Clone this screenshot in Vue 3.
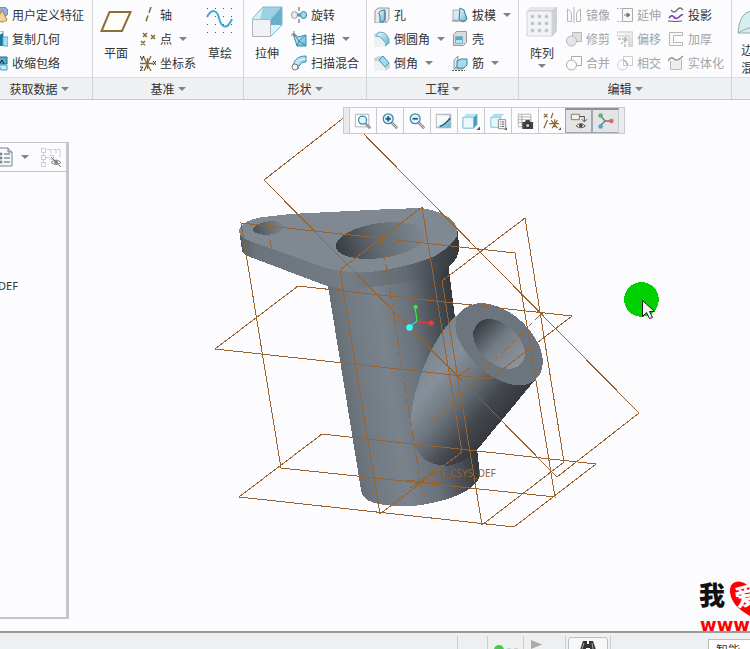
<template>
  <div class="app">
    <svg class="defs" width="0" height="0" aria-hidden="true">
      <defs>
        <linearGradient id="blue" x1="0" y1="0" x2="1" y2="1">
          <stop offset="0" stop-color="#f2fbff" />
          <stop offset="1" stop-color="#5db3d3" />
        </linearGradient>
        <linearGradient id="grey" x1="0" y1="0" x2="1" y2="1">
          <stop offset="0" stop-color="#fff" />
          <stop offset="1" stop-color="#d5d8da" />
        </linearGradient>
      </defs>
    </svg>

    <header class="ribbon">
      <section v-for="group in groups" :key="group.title" class="group" :class="group.cls">
        <div class="group-body">
          <template v-for="(block, i) in group.blocks" :key="i">
            <button v-if="block.big" type="button" class="big">
              <svg width="32" height="32" viewBox="0 0 32 32" v-html="icons[block.icon]"></svg>
              <span>{{ block.big }}</span>
              <i v-if="block.arrow" class="arrow"></i>
            </button>
            <div v-else class="col">
              <button
                v-for="item in block.items"
                :key="item.text"
                type="button"
                class="tool"
                :disabled="item.off"
              >
                <svg width="16" height="16" viewBox="0 0 16 16" v-html="icons[item.icon]"></svg>
                <span>{{ item.text }}</span>
                <i v-if="item.arrow" class="arrow"></i>
              </button>
            </div>
          </template>
        </div>
        <button type="button" class="group-title">
          {{ group.title }}<i v-if="group.title" class="arrow"></i>
        </button>
      </section>
    </header>

    <main class="work">
      <aside class="tree">
        <div class="tree-head">
          <button type="button" class="tree-btn cut" aria-label="设置">
            <svg width="18" height="20" viewBox="0 0 18 20">
              <path d="M1 1h12l4 4v14H1z" fill="#f4f8fa" stroke="#77838c" />
              <path d="M13 1v4h4" fill="#b9d8e5" stroke="#77838c" />
              <path d="M9 7h6M9 11h6M9 15h6" stroke="#52616c" />
              <g fill="none" stroke="#52616c"><circle cx="6" cy="7" r="1" /><circle cx="6" cy="11" r="1" /><circle cx="6" cy="15" r="1" /></g>
            </svg>
          </button>
          <i class="arrow"></i>
          <button type="button" class="tree-btn" aria-label="显示">
            <svg width="20" height="20" viewBox="0 0 20 20">
              <g fill="none" stroke="#c9cccf">
                <path d="M.5 1.500h4v4h-4zM.5 8.500h4v4h-4zM.5 15.500h4v4h-4zM2.500 5.500v3M2.500 12.500v3M4.500 10.500h4M8.500 8.500h4v4h-4M6 2.500h4v4M12 2.500h3v4M16 2.500h3v8" />
              </g>
              <path d="M10 15.500q5-5 10 0q-5 4-10 0z" fill="#eee" stroke="#888" />
              <circle cx="15" cy="15" r="2" fill="#888" />
              <path d="M10 10l10 10" stroke="#777" />
            </svg>
          </button>
        </div>
        <p class="tree-item">DEF</p>
      </aside>

      <div class="canvas">
        <svg class="scene" viewBox="68 100 682 531">
          <defs>
            <linearGradient id="tube" gradientUnits="userSpaceOnUse" x1="344" y1="390" x2="462" y2="371">
              <stop offset="0" stop-color="#666e76" />
              <stop offset=".15" stop-color="#727b83" />
              <stop offset=".4" stop-color="#7a838c" />
              <stop offset=".65" stop-color="#69717a" />
              <stop offset=".85" stop-color="#4a5056" />
              <stop offset="1" stop-color="#373b40" />
            </linearGradient>
            <linearGradient id="rim" gradientUnits="userSpaceOnUse" x1="240" y1="0" x2="459" y2="0">
              <stop offset="0" stop-color="#555d65" />
              <stop offset=".07" stop-color="#6b747c" />
              <stop offset=".5" stop-color="#747d86" />
              <stop offset=".75" stop-color="#636b73" />
              <stop offset=".92" stop-color="#3f444a" />
              <stop offset="1" stop-color="#34383d" />
            </linearGradient>
            <linearGradient id="branch" gradientUnits="userSpaceOnUse" x1="440" y1="335" x2="518" y2="399">
              <stop offset="0" stop-color="#7c868f" />
              <stop offset=".25" stop-color="#87909a" />
              <stop offset=".5" stop-color="#6f7880" />
              <stop offset=".8" stop-color="#44484e" />
              <stop offset="1" stop-color="#36393e" />
            </linearGradient>
            <linearGradient id="bore" gradientUnits="userSpaceOnUse" x1="336" y1="245" x2="426" y2="233">
              <stop offset="0" stop-color="#393d42" />
              <stop offset=".45" stop-color="#626a71" />
              <stop offset="1" stop-color="#7f8891" />
            </linearGradient>
            <linearGradient id="bore2" gradientUnits="userSpaceOnUse" x1="478" y1="326" x2="516" y2="362">
              <stop offset="0" stop-color="#3c4045" />
              <stop offset=".5" stop-color="#737c85" />
              <stop offset="1" stop-color="#89929b" />
            </linearGradient>
            <linearGradient id="bore3" gradientUnits="userSpaceOnUse" x1="253" y1="230" x2="285" y2="226">
              <stop offset="0" stop-color="#4c5359" />
              <stop offset="1" stop-color="#7f8891" />
            </linearGradient>
          </defs>

          <g shape-rendering="crispEdges">
            <path fill="url(#tube)" d="M327 280L361 490Q362 499 374 503Q391 507 413 506Q447 502 466 491Q479 483 480 475L477 448L455 318L448 262z" />
            <path fill="url(#rim)" d="M239 230L242 250Q243 255 250 257L327 286Q345 290 370 287Q405 284 427 276Q441 272 448 267Q459 259 459 248L458 231z" />
            <path fill="#808991" d="M239 231Q240 221 263 217L290 214L390 209L422 208Q444 212 453 221Q459 228 457 236Q452 246 435 256Q410 267 370 272Q341 273 323 267L250 241Q240 238 239 231z" />
            <ellipse cx="381" cy="240.500" rx="45.500" ry="17.500" transform="rotate(-8 381 240.500)" fill="url(#bore)" />
            <ellipse cx="269" cy="228" rx="16" ry="6.500" transform="rotate(-6 269 228)" fill="url(#bore3)" />
            <path fill="url(#branch)" d="M467 307Q450 319 440 335Q426 357 419 381Q411 404 411 423Q411 444 423 458Q431 465 447 466Q465 463 477 450L535 380z" />
            <path fill="#6c757d" d="M483 303Q500 305 515 316Q530 327 539 345Q547 365 538 377Q530 387 514 385Q494 381 479 367Q464 353 457 336Q453 322 459 313Q468 303 483 303z" />
            <path fill="url(#bore2)" d="M488 319Q501 319 514 331Q525 343 525 355Q523 368 508 369Q495 367 485 358Q473 346 473 333Q476 320 488 319z" />

            <g class="wire">
              <path v-for="plane in planes" :key="plane" :d="plane" />
              <path d="M268 221l4 33" stroke-dasharray="8 4 3 4" />
              <path d="M382 240l41 260" stroke-dasharray="12 4 4 4" />
              <path d="M543 312L434 421" stroke-dasharray="12 4 4 4" />
              <path d="M537 311l6 3M456 377l14-9" />
              <path d="M406 480l34 4M410 488l22-14M421 483l18-1M412 490l14-14" />
            </g>
          </g>
          <text class="csys" x="428" y="477">PRT_CSYS_DEF</text>

          <g fill="none">
            <path d="M417 321l-2-14" stroke="#3f3" />
            <path d="M418 322l13 1" stroke="#f33" />
            <path d="M417 321l-8 6" stroke="#3ff" />
          </g>
          <circle cx="415.500" cy="307" r="2.200" fill="#3e3" />
          <circle cx="431" cy="323" r="2.600" fill="#f33" />
          <circle cx="409.500" cy="327.500" r="3.200" fill="#3ff" />

          <circle cx="641.500" cy="299.500" r="17.300" fill="#00cf00" shape-rendering="crispEdges" />
          <path d="M642.500 300.500v16l4-4l3 6l3-1l-3-6h5z" fill="#f2f2f2" stroke="#222" />

          <text class="mark-dark" x="699" y="605">我</text>
          <path d="M750 588C742 578 729 580 730 592C731 604 741 611 750 616z" fill="#f00" />
          <text class="mark-light" x="737" y="607" transform="rotate(-12 737 607)">爱</text>
          <text class="mark-url" x="700" y="631">www.</text>
        </svg>

        <div class="view-bar">
          <button
            v-for="view in views"
            :key="view.icon"
            type="button"
            :class="{ pressed: view.pressed }"
            :aria-label="view.label"
          >
            <svg width="18" height="18" viewBox="0 0 20 20" v-html="icons[view.icon]"></svg>
          </button>
        </div>
      </div>
    </main>

    <footer class="status">
      <div class="cell narrow"></div>
      <div class="cell lights">
        <svg width="28" height="12" viewBox="0 0 28 12">
          <circle cx="5" cy="6" r="5" fill="#4c4" />
          <circle cx="15" cy="7" r="3" fill="#ccc" />
          <circle cx="22" cy="7" r="3" fill="#ccc" />
        </svg>
      </div>
      <div class="cell flag">
        <svg width="14" height="14" viewBox="0 0 14 14"><path d="M1 0l11 4.500L1 9z" fill="#aaa" /></svg>
      </div>
      <div class="cell find">
        <button type="button" aria-label="查找">
          <svg width="18" height="16" viewBox="0 0 18 16">
            <path d="M4 1h4v3h2V1h4l3 9v5h-6V8H7v7H1v-5z" fill="#333" />
            <path d="M5 3l-2 6M13 3l1 6" stroke="#aaa" />
          </svg>
        </button>
      </div>
      <select class="filter" aria-label="过滤器">
        <option>智能</option>
      </select>
    </footer>
  </div>
</template>

<script setup>
const groups = [
  {
    title: '获取数据',
    cls: 'first',
    blocks: [
      {
        items: [
          { text: '用户定义特征', icon: 'udf' },
          { text: '复制几何', icon: 'copyGeom' },
          { text: '收缩包络', icon: 'shrink' },
        ],
      },
    ],
  },
  {
    title: '基准',
    blocks: [
      { big: '平面', icon: 'plane' },
      {
        items: [
          { text: '轴', icon: 'axis' },
          { text: '点', icon: 'point', arrow: true },
          { text: '坐标系', icon: 'csys' },
        ],
      },
      { big: '草绘', icon: 'sketch' },
    ],
  },
  {
    title: '形状',
    cls: 'tail',
    blocks: [
      { big: '拉伸', icon: 'extrude' },
      {
        items: [
          { text: '旋转', icon: 'revolve' },
          { text: '扫描', icon: 'sweep', arrow: true },
          { text: '扫描混合', icon: 'blend' },
        ],
      },
    ],
  },
  {
    title: '工程',
    cls: 'lead tail',
    blocks: [
      {
        items: [
          { text: '孔', icon: 'hole' },
          { text: '倒圆角', icon: 'round', arrow: true },
          { text: '倒角', icon: 'chamfer', arrow: true },
        ],
      },
      {
        items: [
          { text: '拔模', icon: 'draft', arrow: true },
          { text: '壳', icon: 'shell' },
          { text: '筋', icon: 'rib', arrow: true },
        ],
      },
    ],
  },
  {
    title: '编辑',
    cls: 'tail',
    blocks: [
      { big: '阵列', icon: 'pattern', arrow: true },
      {
        items: [
          { text: '镜像', icon: 'mirror', off: true },
          { text: '修剪', icon: 'trim', off: true },
          { text: '合并', icon: 'merge', off: true },
        ],
      },
      {
        items: [
          { text: '延伸', icon: 'extend', off: true },
          { text: '偏移', icon: 'offset', off: true },
          { text: '相交', icon: 'intersect', off: true },
        ],
      },
      {
        items: [
          { text: '投影', icon: 'project' },
          { text: '加厚', icon: 'thicken', off: true },
          { text: '实体化', icon: 'solidify', off: true },
        ],
      },
    ],
  },
  {
    title: '',
    cls: 'last',
    blocks: [{ big: '边界混合', icon: 'boundary' }],
  },
]

const views = [
  { icon: 'zoomFit', label: '重新调整' },
  { icon: 'zoomIn', label: '放大' },
  { icon: 'zoomOut', label: '缩小' },
  { icon: 'repaint', label: '重画' },
  { icon: 'shade', label: '显示样式' },
  { icon: 'saved', label: '已保存方向' },
  { icon: 'camera', label: '视图管理器' },
  { icon: 'datums', label: '基准显示过滤器' },
  { icon: 'notes', label: '注释显示', pressed: true },
  { icon: 'spin', label: '旋转中心', pressed: true },
]

// datum plane outlines
const planes = [
  'M241 223L515 253L555 497L281 468z',
  'M422 207L340 270L380 514L462 452z',
  'M525 218L442 281L482 525L564 462z',
  'M215 349L298 286L572 316L490 379z',
  'M322 434L596 464L514 527L239 497z',
  'M264 180L346 116L639 413L557 477z',
]

const lens = `<path d="M12 12l6 6" stroke="#8d8d8d" stroke-width="3"/><path d="M12 12l6 6" stroke="#ddd" stroke-width="1"/>
  <circle cx="8" cy="7.500" r="5.500" fill="#e4f5fb" stroke="#3a87a8" stroke-width="1.400"/>`

let dots = ''
for (let y = 0; y < 4; y++) {
  for (let x = 0; x < 4; x++) dots += `<path d="M${3 + x * 8} ${3 + y * 8}h1v1h-1z" fill="#555"/>`
}

let cells = ''
for (let y = 0; y < 3; y++) {
  for (let x = 0; x < 3; x++) cells += `<path d="M${5 + x * 7} ${10 + y * 7}h3v3h-3z" fill="#a9adb1" stroke="#d4e2ea"/>`
}

const icons = {
  udf: `<circle cx="11" cy="5" r="5" fill="#8db1e3" stroke="#557bb5"/><path d="M10 3l5 10q-5 4-10 0z" fill="#f2d39a" stroke="#a7823f"/>`,
  copyGeom: `<path d="M5 0h6v12H5z" fill="#fff" stroke="#888"/><path d="M7 4l4-2v13H7z" fill="#1b789e"/><path d="M11 6h5v9h-5z" fill="#a5dff5" stroke="#58a8c5"/>`,
  shrink: `<path d="M6 2h9v7H6z" fill="#5cabc9" stroke="#246c8a"/><path d="M6 5l2 3l2-3l2 4" fill="none" stroke="#123"/><path d="M7 10h8v5H9z" fill="#bdefff" stroke="#4b9db9"/>`,
  plane: `<path d="M9.500 7h21L22 26H1.500z" fill="#fffdf8" stroke="#8c6f38" stroke-width="2"/>`,
  axis: `<path d="M11 0L5 17" stroke="#86682e" stroke-width="1.500" stroke-dasharray="6 3"/>`,
  point: `<path d="M3 2l4 4m0-4l-4 4M11 4l4 4m0-4l-4 4M1 10l4 4m0-4l-4 4" stroke="#86682e" stroke-width="1.500"/>`,
  csys: `<path d="M0 8.500h13M3 1l8 15M11 1L4 16M7.500 3v11" stroke="#86682e" stroke-width="1.300"/><path d="M0 1l2 3 2-3M2 4v2M0 12h3l-3 4h3M13 6l3 4m0-4l-3 4" fill="none" stroke="#333"/>`,
  sketch: `${dots}<path d="M3 12c5-9 10-7 12 1s7 14 13 1" fill="none" stroke="#3aaedb" stroke-width="2"/>`,
  extrude: `<path d="M1 14L12 2h19L20 14z" fill="#9bd3e6"/><path d="M12 2h-1L1 14h8z" fill="#d7f0f8"/><path d="M31 2v18H20v-6z" fill="#69aec8"/><path d="M20 20h11L20 32z" fill="#d9f3fc"/><path d="M1.500 14.500h18v17h-18z" fill="#f1f2f3" stroke="#b1b5b8"/><path d="M1 14L12 2h19v18L20 31M20 14L31 2" fill="none" stroke="#7fb9cd"/>`,
  revolve: `<path d="M8 0v16" stroke="#555" stroke-dasharray="4 2"/><ellipse cx="3.500" cy="8" rx="3" ry="3.500" fill="#e8eaec" stroke="#999"/><ellipse cx="12.500" cy="8" rx="3" ry="3.500" fill="#a5d8ea" stroke="#277ca1"/><path d="M6 8h4" stroke="#4e9dbb" stroke-width="2"/>`,
  sweep: `<path d="M2 2l5 4 8-2v11H6z" fill="url(#blue)" stroke="#368aad"/><path d="M2 2l6 8 7-6M8 10l-2 5M8 10l7 5" fill="none" stroke="#368aad"/><path d="M0 4h5M3 0v6" stroke="#888"/>`,
  blend: `<path d="M2 11C3 4 8 1 15 1v6c-5 0-7 3-8 7z" fill="url(#blue)" stroke="#398bad"/><path d="M6 9c2-4 5-5 9-5" fill="none" stroke="#fff"/><circle cx="4" cy="12" r="3" fill="#f5f5f5" stroke="#777"/>`,
  hole: `<path d="M1 4l3-3h11v11l-3 4H1z" fill="#e8eaeb" stroke="#999"/><path d="M5 7q0-4 6-4v9l-2 3H6V9z" fill="url(#blue)" stroke="#187aa3"/><path d="M11 5v10" stroke="#777"/>`,
  round: `<path d="M0 3l4-2h6l6 7v4l-5 4H0z" fill="#d2d5d7"/><path d="M5 1q10 0 10 11l-4 3q0-9-9-10z" fill="url(#blue)" stroke="#69acc6"/><path d="M0 6h5l6 6v4H0z" fill="#eff0f1"/>`,
  chamfer: `<path d="M0 3l5-2h4l7 8v4l-5 3H0z" fill="#cfd2d4"/><path d="M0 6h5l6 6v4H0z" fill="#eff0f1"/><path d="M9 1l6 7-4 4-6-7z" fill="#9bdff1" stroke="#3d98b7"/>`,
  draft: `<path d="M1 3h7v10H1z" fill="#d8ebf2" stroke="#9ab5bf"/><path d="M8 1l4 2 3 9-4 3-4-3z" fill="url(#blue)" stroke="#2580a2"/><path d="M0 14h14" stroke="#777"/>`,
  shell: `<path d="M1.500 3.500l3-3h10v11l-3 3h-10z" fill="#d9dcde" stroke="#999"/><path d="M3.500 5.500h7v7h-7z" fill="#5aa9ca" stroke="#7fb4c9"/><path d="M4 12V9h6v3z" fill="#b4e4f3"/>`,
  rib: `<path d="M2 5l4-4v9l-4 4zM6 10h9l-4 4H2" fill="#dfe3e5" stroke="#999"/><path d="M5 6l4-2h6v6l-3 3H5z" fill="#a5ddef" stroke="#2b86a8"/><path d="M0 15.500h13" stroke="#555" stroke-dasharray="2 1"/>`,
  pattern: `<path d="M1 6l4-4h26v24l-4 5H1z" fill="#ced0d2"/><path d="M1 6h25v25H1z" fill="#f2f3f4" stroke="#d1d4d6"/><path d="M2 5l4-3h24l-4 3z" fill="#e5e7e8"/>${cells}`,
  mirror: `<path d="M1.500 2q4 2 4 5v7.500h-4zM14.500 2q-4 2-4 5v7.500h4z" fill="none" stroke="#b5b7b9"/><path d="M8 0v16" stroke="#b5b7b9"/>`,
  trim: `<path d="M6.500 1.500h9v9h-9z" fill="#dedfe0" stroke="#b5b7b9"/><circle cx="5.500" cy="10" r="5" fill="#e4e6e7" stroke="#b5b7b9"/>`,
  merge: `<path d="M5.500 1.500h10v9h-5M5.500 1.500v3" fill="none" stroke="#aaa"/><circle cx="5.500" cy="10" r="5" fill="none" stroke="#aaa"/>`,
  extend: `<path d="M5.500 1.500h10v13h-10z" fill="#f8f8f8" stroke="#aaa"/><path d="M0 1.500h5M0 14.500h5" stroke="#bbb" stroke-dasharray="2 1"/><path d="M7 8h5M10 6v4l3-2z" fill="#666" stroke="#777"/>`,
  offset: `<path d="M0 1h16v15h-4V5H0z" fill="url(#grey)" stroke="#c5c7c9"/><path d="M1 8h7v8M4 13l6-6M7 7h3v3" fill="none" stroke="#999" stroke-dasharray="3 1"/>`,
  intersect: `<path d="M6.500 1.500h9v9h-9z" fill="none" stroke="#ccc"/><circle cx="5.500" cy="10" r="5" fill="none" stroke="#ccc"/><path d="M6.500 5q4 2 4 5" fill="none" stroke="#888"/>`,
  project: `<path d="M3 3q3 4 6 0t6 0" fill="none" stroke="#777" stroke-width="1.300"/><path d="M1 11q3-4 5-1t5 0t4-2" fill="none" stroke="#7538b5" stroke-width="1.600"/><path d="M0 14q7 1 14 0" stroke="#555" fill="none"/>`,
  thicken: `<path d="M14.500 1.500v3h-9v7h9v3H1.500v-13z" fill="#f8f8f8" stroke="#b5b7b9"/>`,
  solidify: `<path d="M2.500 6v8.500h11V4" fill="#eee" stroke="#bbb"/><path d="M0 6q3-5 6-2t9-3" fill="none" stroke="#999" stroke-width="1.600"/>`,
  boundary: `<path d="M1 28Q2 8 14 6l16-3v25z" fill="#d5eef0" stroke="#9aa9ad"/><path d="M1 28q12-8 29-6" fill="none" stroke="#9aa9ad"/>`,
  zoomFit: `<path d="M1.500 2.500h15v14h-15z" fill="#fff" stroke="#aaa"/><path d="M13 13l5 5" stroke="#999" stroke-width="3"/><circle cx="9.500" cy="9" r="4.500" fill="#e4f5fb" stroke="#3a87a8" stroke-width="1.400"/>`,
  zoomIn: `${lens}<path d="M5 7.500h6M8 4.500v6" stroke="#155f80" stroke-width="2"/>`,
  zoomOut: `${lens}<path d="M5 7.500h6" stroke="#155f80" stroke-width="2"/>`,
  repaint: `<path d="M1.500 2.500h16v15h-16z" fill="url(#blue)" stroke="#aaa"/><path d="M2 4h14Q14 15 5 16H2z" fill="#f7f8f8"/><path d="M5 16q4 0 12-9" fill="none" stroke="#175f7d" stroke-width="1.600"/>`,
  shade: `<path d="M1 6h12v12H1z" fill="#e9f8fd" stroke="#68b1cd"/><path d="M1 6l4-4h12l-4 4z" fill="#b6e4f2"/><path d="M13 6l4-4v12l-4 4z" fill="#4b9dbb"/><path d="M20 16v4h-4z" fill="#555"/>`,
  saved: `<path d="M2 6h11v11H2z" fill="#e4f6fc" stroke="#79bad0"/><path d="M2 6l4-4h11l-4 4z" fill="#a9dced"/><path d="M10.500 8.500h8v10h-8z" fill="#fff" stroke="#888"/><path d="M12 11h1M14 11h3M12 13.500h1M14 13.500h3M12 16h1M14 16h3" stroke="#444"/><path d="M20 17v3h-3z" fill="#555"/>`,
  camera: `<path d="M2.500 2.500h14v14h-14zM2.500 5.500h14M2.500 8.500h14M2.500 11.500h14M6.500 2.500v14" fill="#fff" stroke="#aaa"/><path d="M7 11h3l1-2h4l1 2h3v8H7z" fill="#444"/><circle cx="13" cy="15" r="2.500" fill="#bbb" stroke="#111"/>`,
  datums: `<path d="M1 2l4 4m0-4L1 6M11 1L9 7M5 9l-4 9M7 13h11M9 9l7 9M16 9l-6 9M13 8v9" stroke="#86682e" stroke-width="1.300"/><path d="M20 17v3h-3z" fill="#555"/>`,
  notes: `<path d="M1.500 2.500h9v6h-9z" fill="#fff0d3" stroke="#777"/><path d="M11 5h5v5M13 8l3 3 3-3" fill="none" stroke="#444"/><path d="M7 15.500q5-5 10 0q-5 4-10 0z" fill="#fff" stroke="#444"/><circle cx="12" cy="15" r="2" fill="#444"/>`,
  spin: `<path d="M4 4l5 6-5 5M9 10h7" fill="none" stroke="#777" stroke-width="1.500"/><circle cx="4" cy="4" r="2.500" fill="#62b06c"/><circle cx="16" cy="10" r="2.500" fill="#df6464"/><circle cx="4" cy="16" r="2.500" fill="#4ea5c7"/>`,
}
</script>

<style>
body {
  margin: 0;
  background: #fcfcfe;
}
</style>

<style scoped>
.app {
  display: flex;
  flex-direction: column;
  height: 100vh;
  overflow: hidden;
  background: #fcfcfe;
  color: #333;
  font: 12px/16px "Noto Sans CJK SC", sans-serif;
}
.defs {
  position: absolute;
}
button {
  border: 0;
  padding: 0;
  background: none;
  color: inherit;
  font: inherit;
  white-space: nowrap;
}
svg {
  flex: none;
}
.arrow {
  flex: none;
  border: 4px solid transparent;
  border-top-color: #808386;
  border-bottom: 0;
}

/* ribbon */
.ribbon {
  display: flex;
  flex: none;
  overflow: hidden;
  border-bottom: 1px solid #c5c8cb;
}
.group {
  display: flex;
  flex: none;
  flex-direction: column;
  border-right: 1px solid #d2d4d6;
}
.group-body {
  display: flex;
  height: 74px;
  padding-top: 3px;
}
.lead .group-body {
  padding-left: 6px;
}
.tail .group-body {
  padding-right: 6px;
}
.first .group-body {
  padding-right: 7px;
}
.first .col {
  margin-left: -8px;
}
.first .group-title {
  padding-right: 14px;
}
.last {
  flex: 1 0 0;
  width: 0;
  overflow: hidden;
  border-right: 0;
}
.last .big {
  width: 42px;
}
.last .big span {
  width: 24px;
  line-height: 18px;
  white-space: normal;
}
.last .big svg {
  margin-bottom: 4px;
}
.col {
  display: flex;
  flex-direction: column;
  margin: 0 1px;
}
.col + .col {
  margin-left: 6px;
}
.tool {
  display: flex;
  align-items: center;
  height: 24px;
}
.tool span {
  margin-left: 4px;
}
.tool .arrow {
  margin-left: 7px;
}
.tool:disabled {
  color: #a2a4a6;
}
.big {
  display: flex;
  flex: none;
  flex-direction: column;
  align-items: center;
  width: 46px;
  padding-top: 2px;
}
.big svg {
  margin-bottom: 8px;
}
.big .arrow {
  margin-top: 3px;
}
.group-title {
  display: flex;
  align-items: center;
  justify-content: center;
  gap: 3px;
  height: 22px;
  border-top: 1px solid #dcdee0;
  background: #eff0f2;
}

/* work area */
.work {
  display: flex;
  flex: 1;
  min-height: 0;
}
.tree {
  flex: none;
  width: 66px;
  margin: 42px 0 12px;
  border: 1px solid #c3c6c9;
  border-width: 1px 3px 2px 0;
  overflow: hidden;
}
.tree-head {
  display: flex;
  align-items: center;
  gap: 8px;
  height: 28px;
  border-bottom: 1px solid #c3c6c9;
}
.tree-head .arrow {
  margin-right: 4px;
}
.tree-btn {
  display: flex;
}
.cut {
  margin-left: -5px;
}
.tree-item {
  margin: 106px 0 0 -2px;
  font-family: "Noto Sans", sans-serif;
  font-size: 11px;
}
.canvas {
  position: relative;
  flex: 1;
  min-width: 0;
  margin-left: -1px;
}
.scene {
  display: block;
  width: 100%;
  height: 100%;
}
.wire {
  fill: none;
  stroke: #9a622c;
}
.csys {
  fill: #9a622c;
  font: 10px "Noto Sans", sans-serif;
}
.mark-dark {
  fill: #111;
  font: 900 26px "Noto Sans CJK SC", sans-serif;
}
.mark-light {
  fill: #fff;
  font: 900 24px "Noto Sans CJK SC", sans-serif;
}
.mark-url {
  fill: #f00;
  font: bold 18px "DejaVu Sans", sans-serif;
}
.view-bar {
  position: absolute;
  top: 7px;
  left: 275px;
  display: flex;
  border: 1px solid #c8cbce;
  padding: 0 5px;
  background: #e9ebed;
}
.view-bar button {
  display: flex;
  align-items: center;
  justify-content: center;
  width: 27px;
  height: 25px;
  border-left: 1px solid #c8cbce;
  background: #fcfcfe;
}
.view-bar button:last-child {
  border-right: 1px solid #c8cbce;
}
.view-bar .pressed {
  border: 1px solid #a4a7aa;
  border-top: 2px solid #8e9194;
  background: #e3e4e8;
}

/* status bar */
.status {
  display: flex;
  flex: none;
  align-items: flex-start;
  justify-content: flex-end;
  height: 16px;
  overflow: hidden;
  border-top: 2px solid #989b9a;
  background: #eeeff1;
}
.cell {
  box-sizing: border-box;
  height: 16px;
  margin-top: 3px;
  border-left: 1px solid #cbcdcf;
}
.narrow {
  width: 30px;
}
.lights {
  width: 36px;
  padding: 7px 0 0 6px;
}
.flag {
  width: 42px;
  padding: 4px 0 0 6px;
}
.find {
  width: 46px;
  padding: 1px 2px 0;
  border-right: 1px solid #cbcdcf;
}
.find button {
  width: 100%;
  height: 24px;
  border: 1px solid #bdc0c3;
  border-radius: 3px;
  background: #f6f7f8;
}
.filter {
  flex: none;
  width: 42px;
  height: 22px;
  margin: 6px 0 0 97px;
  border: 1px solid #b9bcbf;
  border-right: 0;
  padding: 0 0 0 7px;
  appearance: none;
  background: #fff;
  color: #333;
  font: inherit;
}
</style>
